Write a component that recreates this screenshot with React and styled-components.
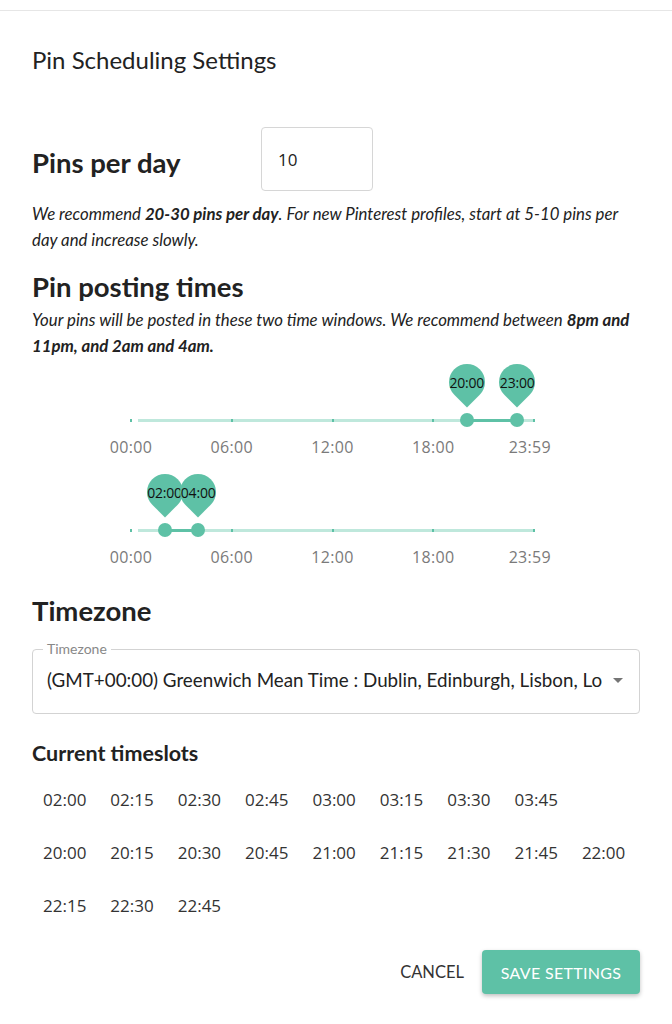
import React from 'react'
import styled, { createGlobalStyle } from 'styled-components'

const teal = '#5ec1a6'
const tealLight = '#bfe8dc'

const GlobalStyle = createGlobalStyle`
    body {
        margin: 0;
        background: #fff;
        font-family: Lato, "Open Sans", sans-serif;
        color: #222;
    }
`

const Dialog = styled.div`
    margin-top: 10px;
    border-top: 1px solid #e6e6e6;
    padding: 0 32px 30px;
`

const Title = styled.h2`
    margin: 0;
    padding-top: 34px;
    font-size: 24px;
    font-weight: 400;
    line-height: 30px;
    color: #222;
`

const Heading = styled.h3`
    margin: 0;
    font-size: 27.5px;
    font-weight: 700;
    line-height: 34px;
    color: #222;
`

const SubHeading = styled.h4`
    margin: 0;
    font-size: 21.5px;
    font-weight: 700;
    line-height: 26px;
    color: #222;
`

const PinsRow = styled.div`
    margin-top: 52px;
    display: flex;
    align-items: center;
    height: 64px;

    ${Heading} {
        width: 229px;
        flex: none;
        margin-top: 8px;
    }
`

const NumberBox = styled.div`
    width: 112px;
    height: 64px;
    box-sizing: border-box;
    border: 1px solid #d6d6d6;
    border-radius: 4px;
    padding: 20px 0 0 16px;
    font-family: "Open Sans", sans-serif;
    font-size: 17px;
    color: #222;
`

const Hint = styled.p`
    margin: ${p => p.$top || 0}px 0 0;
    font-size: 16.8px;
    font-style: italic;
    line-height: 26px;
    color: #222;

    b {
        font-weight: 700;
    }
`

const Section = styled.div`
    margin-top: ${p => p.$top}px;
`

const SliderBox = styled.div`
    position: relative;
    margin-left: 99px;
    width: 403px;
    height: ${p => p.$height}px;
`

const Track = styled.div`
    position: absolute;
    left: 7px;
    right: 0;
    top: 56px;
    height: 3px;
    background: ${tealLight};
`

const Tick = styled.span`
    position: absolute;
    top: 56px;
    width: 2px;
    height: 3px;
    margin-left: -1px;
    background: ${teal};
`

const Range = styled.div`
    position: absolute;
    top: 56px;
    height: 3px;
    background: ${teal};
`

const Thumb = styled.span`
    position: absolute;
    top: 50px;
    width: 14px;
    height: 14px;
    margin-left: -7px;
    border-radius: 50%;
    background: ${teal};
`

const Pin = styled.div`
    position: absolute;
    top: 1px;
    width: 36px;
    height: 36px;
    margin-left: -18px;
    display: flex;
    align-items: center;
    justify-content: center;

    &::before {
        content: '';
        position: absolute;
        inset: 0;
        background: ${teal};
        border-radius: 50% 50% 50% 0;
        transform: rotate(-45deg);
    }

    span {
        position: relative;
        font-family: "Open Sans", sans-serif;
        font-size: 14px;
        letter-spacing: -0.2px;
        color: #111;
        white-space: nowrap;
    }
`

const ScaleLabel = styled.span`
    position: absolute;
    top: 74px;
    transform: translateX(-50%);
    font-family: "Open Sans", sans-serif;
    font-size: 16px;
    letter-spacing: 0.3px;
    line-height: 20px;
    color: #7a7a7a;
    white-space: nowrap;
`

const Fieldset = styled.fieldset`
    margin: 14px 0 0;
    padding: 0 16px 0 14px;
    height: 72px;
    box-sizing: border-box;
    border: 1px solid #d3d3d3;
    border-radius: 4px;
    display: flex;
    align-items: center;
    justify-content: space-between;

    legend {
        padding: 0 4px;
        margin-left: -4px;
        font-size: 14px;
        line-height: 14px;
        color: #888;
    }
`

const SelectValue = styled.span`
    margin-top: -10px;
    font-size: 18.8px;
    color: #222;
    white-space: nowrap;
    overflow: hidden;
`

const Caret = styled.svg`
    margin-top: -8px;
    flex: none;
`

const SlotList = styled.div`
    margin-top: 7px;
`

const SlotGroup = styled.div`
    display: flex;
    flex-wrap: wrap;
    margin: 0 -20px 0 -1px;
`

const Slot = styled.span`
    height: 53px;
    padding: 0 12px;
    display: flex;
    align-items: center;
    font-family: "Open Sans", sans-serif;
    font-size: 17px;
    color: #333;
`

const Actions = styled.div`
    margin-top: 18px;
    display: flex;
    justify-content: flex-end;
    align-items: center;
    gap: 10px;
`

const TextButton = styled.button`
    border: none;
    background: none;
    padding: 8px 8px;
    font-family: Lato, sans-serif;
    font-size: 16.5px;
    color: #333;
    text-transform: uppercase;
`

const PrimaryButton = styled.button`
    width: 158px;
    height: 44px;
    border: none;
    border-radius: 4px;
    background: ${teal};
    color: #fff;
    font-family: Lato, sans-serif;
    font-size: 16px;
    letter-spacing: 0.3px;
    text-transform: uppercase;
    box-shadow: 0 2px 4px rgba(0, 0, 0, 0.25);
`

const pct = h => `${(h / 24) * 100}%`

const scale = [
    ['00:00', 0],
    ['06:00', 6],
    ['12:00', 12],
    ['18:00', 18],
    ['23:59', 23.75],
]

const TimeSlider = ({ from, to, height }) => (
    <SliderBox $height={height}>
        <Track />
        {[0, 6, 12, 18, 24].map(h => <Tick key={h} style={{ left: pct(h) }} />)}
        <Range style={{ left: pct(from.h), width: `${((to.h - from.h) / 24) * 100}%` }} />
        {[from, to].map(p => (
            <React.Fragment key={p.label}>
                <Pin style={{ left: pct(p.h) }}><span>{p.label}</span></Pin>
                <Thumb style={{ left: pct(p.h) }} />
            </React.Fragment>
        ))}
        {scale.map(([l, h]) => <ScaleLabel key={l} style={{ left: pct(h) }}>{l}</ScaleLabel>)}
    </SliderBox>
)

const early = ['02:00', '02:15', '02:30', '02:45', '03:00', '03:15', '03:30', '03:45']
const late = ['20:00', '20:15', '20:30', '20:45', '21:00', '21:15', '21:30', '21:45', '22:00', '22:15', '22:30', '22:45']

const App = () => {
    return (
        <>
            <GlobalStyle />
            <Dialog>
                <Title>Pin Scheduling Settings</Title>

                <PinsRow>
                    <Heading>Pins per day</Heading>
                    <NumberBox>10</NumberBox>
                </PinsRow>
                <Hint $top={10}>
                    We recommend <b>20-30 pins per day</b>. For new Pinterest profiles, start at 5-10 pins per day and increase slowly.
                </Hint>

                <Section $top={17}>
                    <Heading>Pin posting times</Heading>
                    <Hint $top={3}>
                        Your pins will be posted in these two time windows. We recommend between <b>8pm and 11pm, and 2am and 4am.</b>
                    </Hint>
                </Section>

                <Section $top={4}>
                    <TimeSlider
                        height={110}
                        from={{ h: 20, label: '20:00' }}
                        to={{ h: 23, label: '23:00' }}
                    />
                    <TimeSlider
                        height={92}
                        from={{ h: 2, label: '02:00' }}
                        to={{ h: 4, label: '04:00' }}
                    />
                </Section>

                <Section $top={29}>
                    <Heading>Timezone</Heading>
                    <Fieldset>
                        <legend>Timezone</legend>
                        <SelectValue>(GMT+00:00) Greenwich Mean Time : Dublin, Edinburgh, Lisbon, Lo</SelectValue>
                        <Caret width="10" height="5" viewBox="0 0 10 5">
                            <path d="M0 0 L10 0 L5 5 Z" fill="#757575" />
                        </Caret>
                    </Fieldset>
                </Section>

                <Section $top={26}>
                    <SubHeading>Current timeslots</SubHeading>
                    <SlotList>
                        <SlotGroup>
                            {early.map(t => <Slot key={t}>{t}</Slot>)}
                        </SlotGroup>
                        <SlotGroup>
                            {late.map(t => <Slot key={t}>{t}</Slot>)}
                        </SlotGroup>
                    </SlotList>
                </Section>

                <Actions>
                    <TextButton>Cancel</TextButton>
                    <PrimaryButton>Save settings</PrimaryButton>
                </Actions>
            </Dialog>
        </>
    )
}

export default App
